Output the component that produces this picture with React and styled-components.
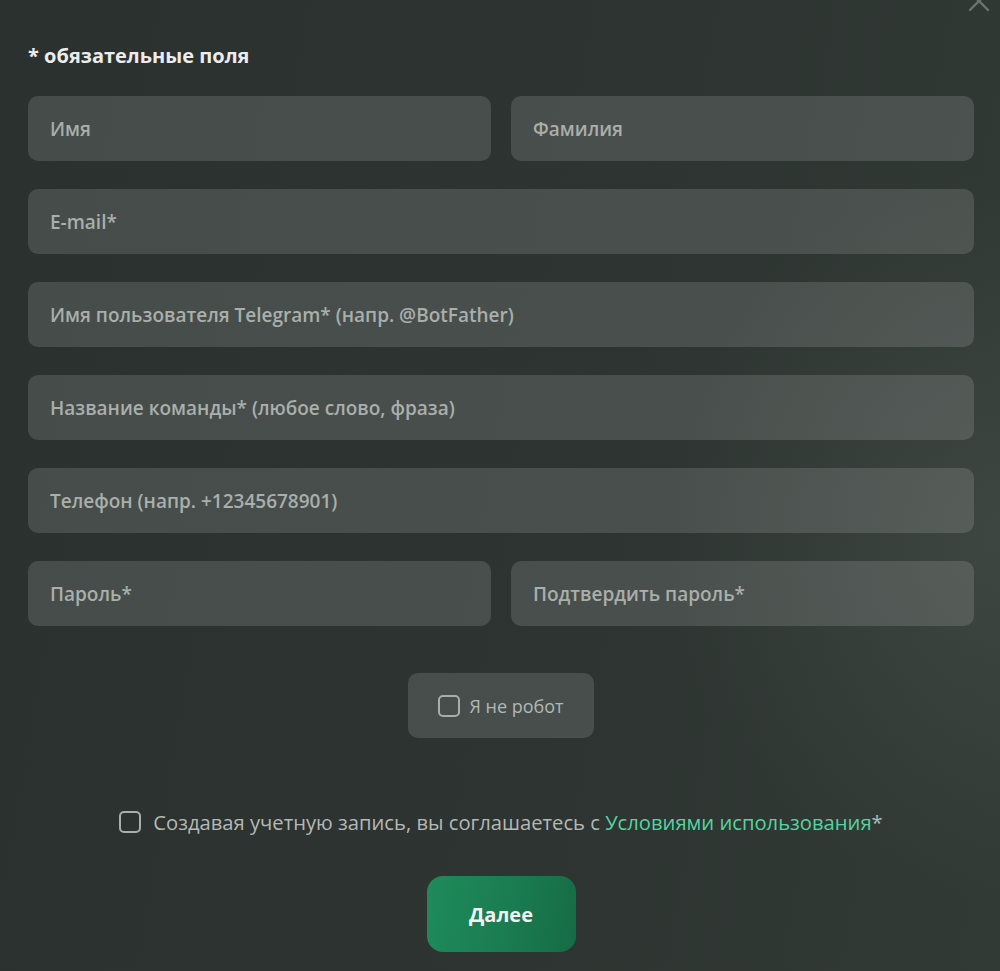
import React, { useState } from 'react';
import styled, { createGlobalStyle } from 'styled-components';

const GlobalStyle = createGlobalStyle`
  html, body {
    margin: 0;
    padding: 0;
    background: #2c3330;
  }
  * {
    box-sizing: border-box;
  }
`;

const Page = styled.div`
  position: relative;
  min-height: 971px;
  overflow: hidden;
  padding: 43px 26px 0 28px;
  font-family: 'Open Sans', 'Noto Sans', sans-serif;
  background:
    radial-gradient(ellipse 480px 520px at 100% 55%, rgba(120, 130, 124, 0.18), rgba(120, 130, 124, 0) 70%),
    linear-gradient(100deg, #2a312e 0%, #2d3431 60%, #323a36 100%);
  display: flex;
  flex-direction: column;
`;

const CloseButton = styled.button`
  position: absolute;
  top: -11px;
  right: 9px;
  width: 24px;
  height: 24px;
  padding: 0;
  border: none;
  background: none;
  cursor: pointer;
`;

const Title = styled.div`
  font-size: 20px;
  line-height: 26px;
  font-weight: 700;
  color: #ececec;
  margin-bottom: 27px;
`;

const Form = styled.div`
  display: flex;
  flex-direction: column;
  gap: 28px;
`;

const Row = styled.div`
  display: grid;
  grid-template-columns: ${p => (p.$split ? '1fr 1fr' : '1fr')};
  gap: 20px;
`;

const Field = styled.input`
  height: 65px;
  width: 100%;
  border: none;
  outline: none;
  border-radius: 10px;
  padding: 0 22px;
  background: rgba(255, 255, 255, 0.135);
  font-family: inherit;
  font-size: 19px;
  font-weight: 600;
  color: #e6e6e6;
  &::placeholder {
    color: #a9afab;
  }
`;

const Captcha = styled.label`
  align-self: center;
  margin-top: 47px;
  width: 186px;
  height: 65px;
  border-radius: 10px;
  background: rgba(255, 255, 255, 0.13);
  display: flex;
  align-items: center;
  justify-content: center;
  gap: 9px;
  font-size: 18px;
  color: #b3b8b5;
  cursor: pointer;
`;

const Box = styled.span`
  width: 22px;
  height: 22px;
  flex: none;
  border: 2.5px solid #a9aeab;
  border-radius: 5px;
  background: ${p => (p.$checked ? '#1f8a5a' : 'transparent')};
`;

const Terms = styled.label`
  align-self: center;
  margin-top: 71px;
  display: flex;
  align-items: center;
  gap: 12px;
  font-size: 20.2px;
  line-height: 26px;
  color: #b4b9b6;
  cursor: pointer;
`;

const Link = styled.a`
  color: #57d3a0;
  text-decoration: none;
`;

const Submit = styled.button`
  align-self: center;
  margin-top: 41px;
  width: 149px;
  height: 76px;
  border: none;
  border-radius: 16px;
  background: linear-gradient(100deg, #1e8b5b 0%, #1a7c50 55%, #166b45 100%);
  color: #f2f2f2;
  font-family: inherit;
  font-size: 20px;
  font-weight: 700;
  cursor: pointer;
`;

const fields = [
  [{ ph: 'Имя' }, { ph: 'Фамилия' }],
  [{ ph: 'E-mail*', type: 'email' }],
  [{ ph: 'Имя пользователя Telegram* (напр. @BotFather)' }],
  [{ ph: 'Название команды* (любое слово, фраза)' }],
  [{ ph: 'Телефон (напр. +12345678901)', type: 'tel' }],
  [
    { ph: 'Пароль*', type: 'password' },
    { ph: 'Подтвердить пароль*', type: 'password' }
  ]
];

const App = () => {
  const [robot, setRobot] = useState(false);
  const [agree, setAgree] = useState(false);

  return (
    <Page>
      <GlobalStyle />
      <CloseButton aria-label="Закрыть">
        <svg width="24" height="24" viewBox="0 0 24 24">
          <path d="M3 3L21 21M21 3L3 21" stroke="#6d7470" strokeWidth="2.4" strokeLinecap="round" />
        </svg>
      </CloseButton>
      <Title>* обязательные поля</Title>
      <Form>
        {fields.map((row, i) => (
          <Row key={i} $split={row.length > 1}>
            {row.map(f => (
              <Field key={f.ph} type={f.type || 'text'} placeholder={f.ph} />
            ))}
          </Row>
        ))}
      </Form>
      <Captcha onClick={() => setRobot(!robot)}>
        <Box $checked={robot} />
        Я не робот
      </Captcha>
      <Terms onClick={() => setAgree(!agree)}>
        <Box $checked={agree} />
        <span>
          Создавая учетную запись, вы соглашаетесь с{' '}
          <Link href="#">Условиями использования</Link>*
        </span>
      </Terms>
      <Submit>Далее</Submit>
    </Page>
  );
};

export default App;
